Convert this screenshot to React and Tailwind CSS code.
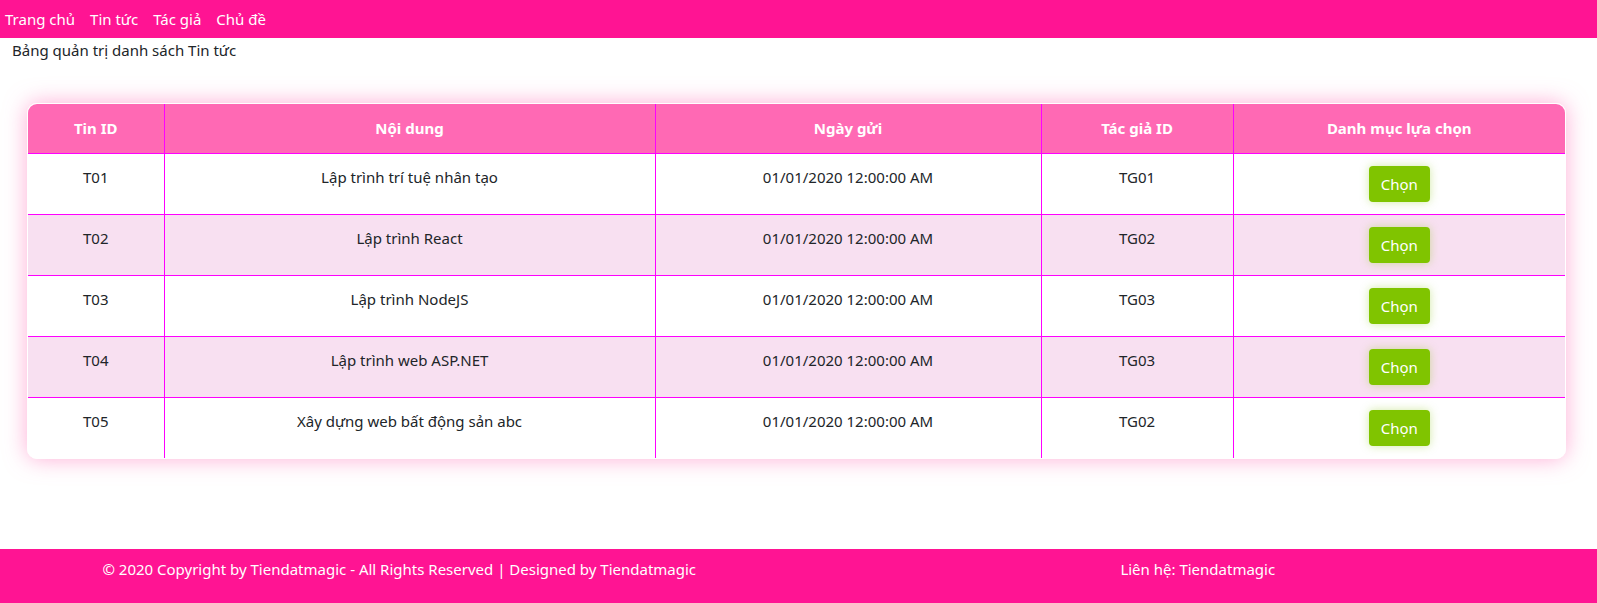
import React from 'react';

const news = [
  { id: 'T01', content: 'Lập trình trí tuệ nhân tạo', date: '01/01/2020 12:00:00 AM', author: 'TG01' },
  { id: 'T02', content: 'Lập trình React', date: '01/01/2020 12:00:00 AM', author: 'TG02' },
  { id: 'T03', content: 'Lập trình NodeJS', date: '01/01/2020 12:00:00 AM', author: 'TG03' },
  { id: 'T04', content: 'Lập trình web ASP.NET', date: '01/01/2020 12:00:00 AM', author: 'TG03' },
  { id: 'T05', content: 'Xây dựng web bất động sản abc', date: '01/01/2020 12:00:00 AM', author: 'TG02' },
];

export default function App() {
  return (
    <div className="min-h-[603px] flex flex-col bg-white text-[#212529] text-[15px] leading-6 font-['Noto_Sans',sans-serif]">
      {/* Navbar */}
      <nav className="h-[38px] bg-[#ff1493] flex items-center gap-[15px] pl-[5px] text-white">
        <a className="cursor-pointer">Trang chủ</a>
        <a className="cursor-pointer">Tin tức</a>
        <a className="cursor-pointer">Tác giả</a>
        <a className="cursor-pointer">Chủ đề</a>
      </nav>

      <p className="pl-[12px]">Bảng quản trị danh sách Tin tức</p>

      {/* News table */}
      <div className="mt-[41px] ml-[27px] mr-[31px] rounded-[10px] overflow-hidden border border-white shadow-[0_0_22px_rgba(255,105,180,0.55)]">
        <table className="w-full table-fixed border-collapse text-center">
          <colgroup>
            <col className="w-[136px]" />
            <col className="w-[491px]" />
            <col className="w-[386px]" />
            <col className="w-[192px]" />
            <col />
          </colgroup>
          <thead>
            <tr className="bg-[#ff69b4] text-white font-bold">
              <th className="h-[49px] px-3 border-r border-b border-[#ff00ff]">Tin ID</th>
              <th className="px-3 border-r border-b border-[#ff00ff]">Nội dung</th>
              <th className="px-3 border-r border-b border-[#ff00ff]">Ngày gửi</th>
              <th className="px-3 border-r border-b border-[#ff00ff]">Tác giả ID</th>
              <th className="px-3 border-b border-[#ff00ff]">Danh mục lựa chọn</th>
            </tr>
          </thead>
          <tbody>
            {news.map((item, i) => {
              const last = i === news.length - 1;
              const cell = last
                ? 'align-top pt-[11px] px-3 border-r border-[#ff00ff]'
                : 'align-top pt-[11px] px-3 border-r border-b border-[#ff00ff]';
              return (
                <tr key={item.id} className={i % 2 === 1 ? 'bg-[#f8e0f1]' : 'bg-white'}>
                  <td className={cell + ' h-[61px]'}>{item.id}</td>
                  <td className={cell}>{item.content}</td>
                  <td className={cell}>{item.date}</td>
                  <td className={cell}>{item.author}</td>
                  <td className={last ? 'align-top pt-[12px] px-3' : 'align-top pt-[12px] px-3 border-b border-[#ff00ff]'}>
                    <button className="h-[36px] w-[61px] rounded bg-[#80c400] text-white text-[15px] shadow-[0_0_10px_rgba(128,196,0,0.35)] cursor-pointer">
                      Chọn
                    </button>
                  </td>
                </tr>
              );
            })}
          </tbody>
        </table>
      </div>

      {/* Footer */}
      <footer className="mt-auto h-[54px] bg-[#ff1493] text-white grid grid-cols-2 pt-[8px]">
        <div className="text-center">© 2020 Copyright by Tiendatmagic - All Rights Reserved | Designed by Tiendatmagic</div>
        <div className="text-center">Liên hệ: Tiendatmagic</div>
      </footer>
    </div>
  );
}
